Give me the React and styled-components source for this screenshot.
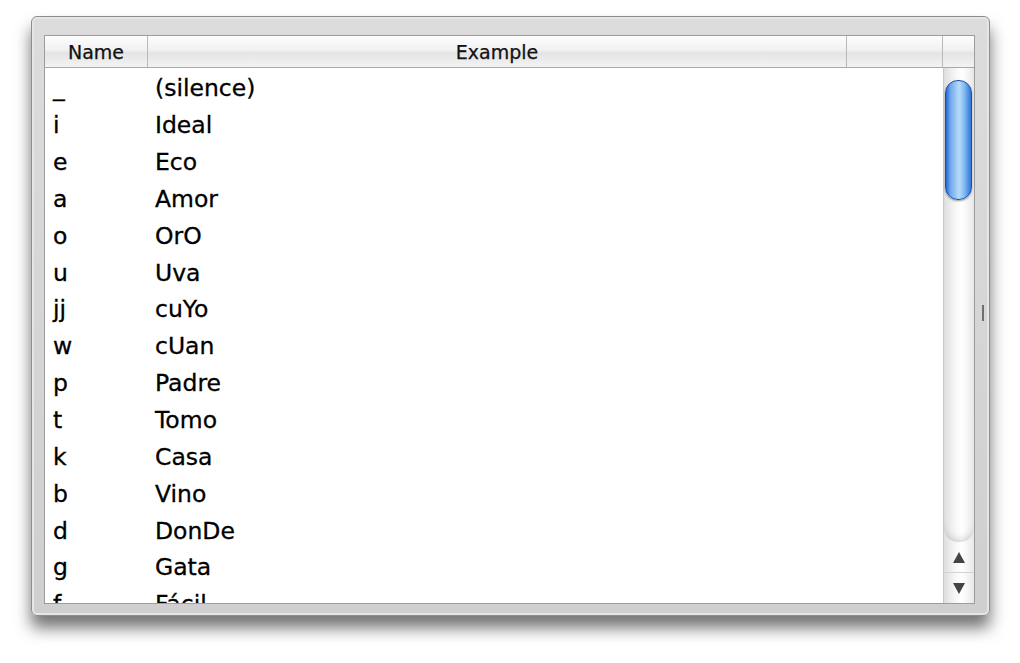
import React from 'react'
import styled, { createGlobalStyle } from 'styled-components'

const rows = [
  ['_', '(silence)'],
  ['i', 'Ideal'],
  ['e', 'Eco'],
  ['a', 'Amor'],
  ['o', 'OrO'],
  ['u', 'Uva'],
  ['jj', 'cuYo'],
  ['w', 'cUan'],
  ['p', 'Padre'],
  ['t', 'Tomo'],
  ['k', 'Casa'],
  ['b', 'Vino'],
  ['d', 'DonDe'],
  ['g', 'Gata'],
  ['f', 'Fácil']
]

const GlobalStyle = createGlobalStyle`
  html, body {
    margin: 0;
    background: #fff;
  }
  body {
    font-family: "DejaVu Sans", "Liberation Sans", sans-serif;
    color: #000;
  }
`

const Page = styled.div`
  width: 1020px;
  height: 663px;
  padding: 16px 30px 0 31px;
  box-sizing: border-box;
`

const Frame = styled.div`
  position: relative;
  height: 600px;
  box-sizing: border-box;
  padding: 18px 14px 11px 12px;
  border: 1px solid #8e8e8e;
  border-radius: 6px;
  background: linear-gradient(#dcdcdc, #cfcfcf);
  box-shadow: inset 0 0 0 2px #e6e6e6, 0 12px 16px rgba(0, 0, 0, 0.55);
  display: flex;
`

const Grip = styled.div`
  position: absolute;
  right: 5px;
  top: 288px;
  width: 2px;
  height: 16px;
  background: #6e6e6e;
`

const Panel = styled.div`
  flex: 1;
  display: flex;
  flex-direction: column;
  border: 1px solid #9c9c9c;
  background: #fff;
  overflow: hidden;
`

const Header = styled.div`
  display: grid;
  grid-template-columns: 103px 699px 96px 1fr;
  height: 31px;
  border-bottom: 1px solid #a9a9a9;
  background: linear-gradient(#fdfdfd 0%, #f1f1f1 45%, #e4e4e4 55%, #f3f3f3 100%);
`

const HeadCell = styled.div`
  display: flex;
  align-items: center;
  justify-content: center;
  font-size: 19px;
  color: #111;
  -webkit-text-stroke: 0.25px #111;
  border-right: ${p => (p.$last ? 'none' : '1px solid #b9b9b9')};
`

const Body = styled.div`
  flex: 1;
  display: flex;
  min-height: 0;
`

const List = styled.div`
  flex: 1;
  padding-top: 2px;
  overflow: hidden;
`

const Row = styled.div`
  display: grid;
  grid-template-columns: 103px 1fr;
  height: 36.85px;
  align-items: center;
  font-size: 23.5px;
  -webkit-text-stroke: 0.3px #000;
`

const NameCell = styled.div`
  padding-left: 8px;
`

const ExampleCell = styled.div`
  padding-left: 7px;
`

const Scroller = styled.div`
  width: 30px;
  display: flex;
  flex-direction: column;
  border-left: 1px solid #c8c8c8;
  background: linear-gradient(90deg, #dedede, #f8f8f8 40%, #ffffff 60%, #e8e8e8);
`

const Track = styled.div`
  flex: 1;
  padding: 12px 2px 0 1px;
  border-radius: 0 0 14px 14px;
  box-shadow: inset 0 -8px 8px -6px rgba(0, 0, 0, 0.18);
`

const Thumb = styled.div`
  height: 120px;
  border-radius: 13px;
  border: 1px solid #174fb0;
  box-sizing: border-box;
  background: linear-gradient(90deg, #2366d3 0%, #6fa9ec 18%, #a2cdf6 42%, #b7dbf9 52%, #86bdf1 72%, #2f74da 100%);
  box-shadow: 0 1px 2px rgba(0, 0, 0, 0.4);
`

const ArrowButton = styled.div`
  height: 30px;
  display: flex;
  align-items: center;
  justify-content: center;
  border-top: ${p => (p.$first ? 'none' : '1px solid #d4d4d4')};
`

const Arrow = styled.div`
  width: 0;
  height: 0;
  border-left: 6px solid transparent;
  border-right: 6px solid transparent;
  ${p => (p.$up
    ? 'border-bottom: 11px solid #444;'
    : 'border-top: 11px solid #444;')}
`

export default function App () {
  return (
    <Page>
      <GlobalStyle />
      <Frame>
        <Panel>
          <Header>
            <HeadCell>Name</HeadCell>
            <HeadCell>Example</HeadCell>
            <HeadCell />
            <HeadCell $last />
          </Header>
          <Body>
            <List>
              {rows.map(([name, example]) => (
                <Row key={name}>
                  <NameCell>{name}</NameCell>
                  <ExampleCell>{example}</ExampleCell>
                </Row>
              ))}
            </List>
            <Scroller>
              <Track>
                <Thumb />
              </Track>
              <ArrowButton $first>
                <Arrow $up />
              </ArrowButton>
              <ArrowButton>
                <Arrow />
              </ArrowButton>
            </Scroller>
          </Body>
        </Panel>
        <Grip />
      </Frame>
    </Page>
  )
}
